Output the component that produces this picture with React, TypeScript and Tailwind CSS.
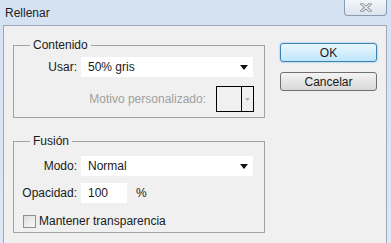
import type { ReactNode } from "react";

function Arrow() {
  return (
    <svg width="8" height="5" viewBox="0 0 8 5" className="shrink-0">
      <path d="M0 0 H8 L4 5 Z" fill="#111" />
    </svg>
  );
}

function Select({ value }: { value: string }) {
  return (
    <div className="flex h-[20px] w-[172px] items-center justify-between bg-white pl-[7px] pr-[5px]">
      <span>{value}</span>
      <Arrow />
    </div>
  );
}

function Group({ title, children, className }: { title: string; children: ReactNode; className?: string }) {
  return (
    <fieldset className={"w-[252px] border border-[#a3a3a3] " + (className ?? "")}>
      <legend className="ml-[16px] px-[3px] leading-[14px]">{title}</legend>
      {children}
    </fieldset>
  );
}

function Button({ label, primary }: { label: string; primary?: boolean }) {
  return (
    <button
      className={
        "h-[19px] w-[97px] rounded-[3px] border leading-[16px] " +
        (primary
          ? "border-[#3c7fb1] bg-gradient-to-b from-[#eaf6fd] to-[#bee6fd] shadow-[0_0_2px_#5fb6ea]"
          : "border-[#707070] bg-gradient-to-b from-[#f4f4f4] to-[#d8d8d8]")
      }
    >
      {label}
    </button>
  );
}

export default function App() {
  return (
    <div className="flex h-[243px] w-[391px] flex-col overflow-hidden bg-gradient-to-b from-[#d5e2f2] to-[#dde8f5] font-['Liberation_Sans',sans-serif] text-[12px] text-[#1a1a1a]">
      {/* title bar */}
      <div className="flex h-[25px] shrink-0 items-start justify-between">
        <span className="pl-[5px] pt-[4px] text-[#222]">Rellenar</span>
        <div className="mr-[4px] flex h-[16px] w-[43px] items-center justify-center rounded-b-[4px] border border-t-0 border-[#8b9bb2] bg-gradient-to-b from-[#f3f6fa] to-[#dbe4ef]">
          <svg width="12" height="9" viewBox="0 0 12 9">
            <path d="M2 1 L10 8 M10 1 L2 8" stroke="#8a8f96" strokeWidth="3" strokeLinecap="square" />
            <path d="M2 1 L10 8 M10 1 L2 8" stroke="#f4f6f8" strokeWidth="1.2" strokeLinecap="square" />
          </svg>
        </div>
      </div>

      {/* body */}
      <div className="ml-[3px] mr-[4px] flex flex-1 border border-b-0 border-[#9aa8b8] bg-[#f0f0f0]">
        <div className="flex flex-col pl-[9px] pt-[12px]">
          <Group title="Contenido" className="pb-[5px]">
            <div className="mt-[5px] flex items-center">
              <span className="w-[63px] text-right">Usar:</span>
              <div className="ml-[4px]">
                <Select value="50% gris" />
              </div>
            </div>
            <div className="mt-[9px] flex items-center justify-end gap-[10px] pr-[10px]">
              <span className="text-[#a0a0a0]">Motivo personalizado:</span>
              <div className="flex h-[26px] w-[38px] border border-black">
                <div className="flex-1 border-r border-black" />
                <div className="flex w-[11px] items-center justify-center">
                  <svg width="5" height="3" viewBox="0 0 5 3">
                    <path d="M0 0 H5 L2.5 3 Z" fill="#b0b0b0" />
                  </svg>
                </div>
              </div>
            </div>
          </Group>

          <Group title="Fusión" className="mt-[16px] pb-[3px]">
            <div className="mt-[8px] flex items-center">
              <span className="w-[63px] text-right">Modo:</span>
              <div className="ml-[4px]">
                <Select value="Normal" />
              </div>
            </div>
            <div className="mt-[7px] flex items-center">
              <span className="w-[63px] text-right">Opacidad:</span>
              <div className="ml-[4px] flex h-[20px] w-[46px] items-center bg-white pl-[7px]">100</div>
              <span className="ml-[9px]">%</span>
            </div>
            <div className="mt-[10px] flex h-[16px] items-center gap-[3px] pl-[9px]">
              <div className="h-[13px] w-[13px] border border-[#8e8f8f] bg-gradient-to-br from-[#dcdcdc] to-[#fbfbfb]" />
              <span>Mantener transparencia</span>
            </div>
          </Group>
        </div>

        <div className="ml-[15px] flex flex-col gap-[10px] pt-[17px]">
          <Button label="OK" primary />
          <Button label="Cancelar" />
        </div>
      </div>
    </div>
  );
}
